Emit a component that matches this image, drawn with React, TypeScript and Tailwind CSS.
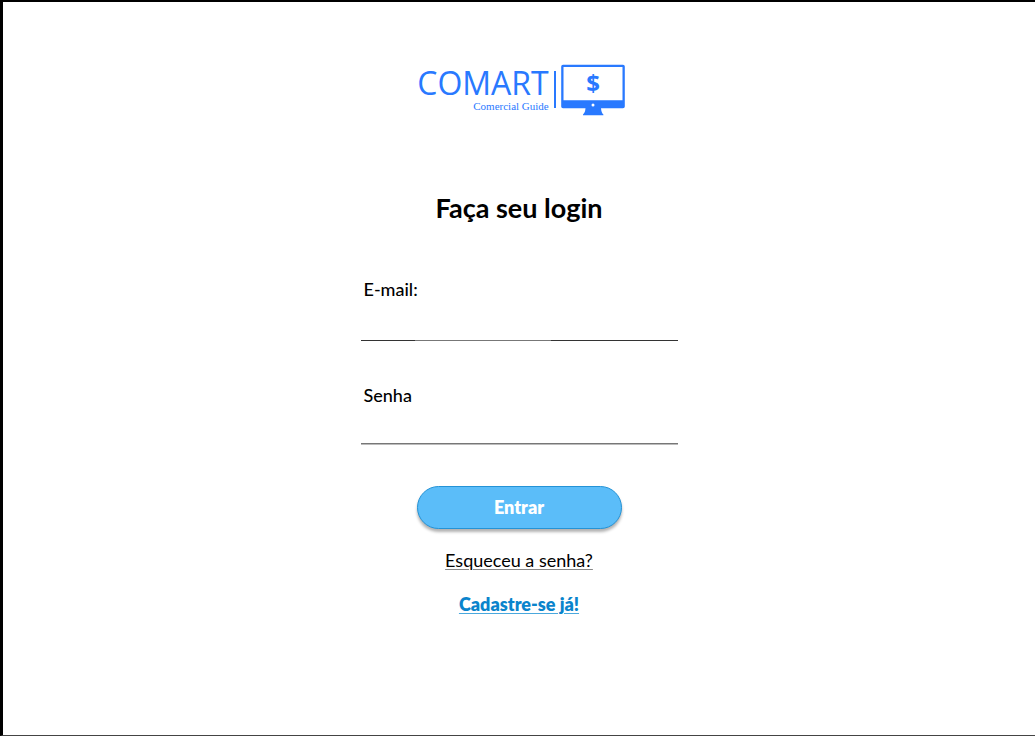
import React from "react";

function Monitor() {
  return (
    <svg viewBox="0 0 64 52" className="h-[52px] w-16 shrink-0" fill="#2979ff" aria-hidden="true">
      <path
        fillRule="evenodd"
        d="M2 0.7h60a1.8 1.8 0 0 1 1.8 1.8v40a1.8 1.8 0 0 1-1.8 1.8H2A1.8 1.8 0 0 1 .2 42.500v-40A1.800 1.800 0 0 1 2 .7ZM2.500 2.900v33.300h59V2.900Z"
      />
      <path d="M24.500 44h15.500c.2 3.500 1 5.200 2.400 6.400v.8H22v-.8c1.500-1.200 2.300-3 2.500-6.400Z" />
      <circle cx="32" cy="41" r="1.500" fill="white" />
      <text x="32" y="28" textAnchor="middle" className="font-['Open_Sans'] text-[24px] font-bold">
        $
      </text>
    </svg>
  );
}

function Logo() {
  return (
    <div className="flex h-[52px] items-start gap-[5px] pl-1 text-[#2979ff]">
      <div className="flex flex-col items-end pt-px">
        <span className="font-['Open_Sans'] text-[32px] leading-9">COMART</span>
        <span className="font-['Liberation_Serif'] text-[11px] leading-[10px]">Comercial Guide</span>
      </div>
      <div className="mt-[7px] h-[37px] w-[2px] bg-[#2979ff]" />
      <Monitor />
    </div>
  );
}

export default function App() {
  return (
    <main className="flex min-h-screen flex-col items-center border-t-2 border-b border-l-[3px] border-t-black border-b-[#444] border-l-black bg-white pt-[62px] font-['Lato',sans-serif] text-black">
      <Logo />
      <h1 className="mt-[76px] text-[27px] leading-8 font-bold">Faça seu login</h1>
      <form className="mt-[55px] flex w-full max-w-[317px] flex-col items-center" onSubmit={(e) => e.preventDefault()}>
        <div className="w-full">
          <label htmlFor="email" className="block px-[3px] text-[18px] leading-5 font-medium">
            E-mail:
          </label>
          <input id="email" type="email" className="mt-px block h-10 w-full px-1 outline-none" />
          <div className="h-px bg-[linear-gradient(to_right,#333_17%,#777_17%,#777_60%,#333_60%)]" />
        </div>
        <div className="mt-11 w-full">
          <label htmlFor="senha" className="block px-[3px] text-[18px] leading-5 font-medium">
            Senha
          </label>
          <input id="senha" type="password" className="block h-[38px] w-full px-1 outline-none" />
          <div className="h-[2px] border-b border-[#bbb] bg-[#777]" />
        </div>
        <button
          type="submit"
          className="mt-[41px] h-[43px] w-[205px] rounded-full border border-[#2493d6] bg-[#5bbdf9] text-[18px] font-extrabold text-white shadow-[0_3px_3px_rgba(0,0,0,0.3)]"
        >
          Entrar
        </button>
      </form>
      <a href="#senha" className="mt-[19px] text-[18px] leading-6 underline decoration-[#888] decoration-1 underline-offset-2">
        Esqueceu a senha?
      </a>
      <a href="#cadastro" className="mt-5 text-[18px] leading-6 font-extrabold text-[#0a84cc] underline decoration-[#4aa8dd] decoration-1 underline-offset-2">
        Cadastre-se já!
      </a>
    </main>
  );
}
